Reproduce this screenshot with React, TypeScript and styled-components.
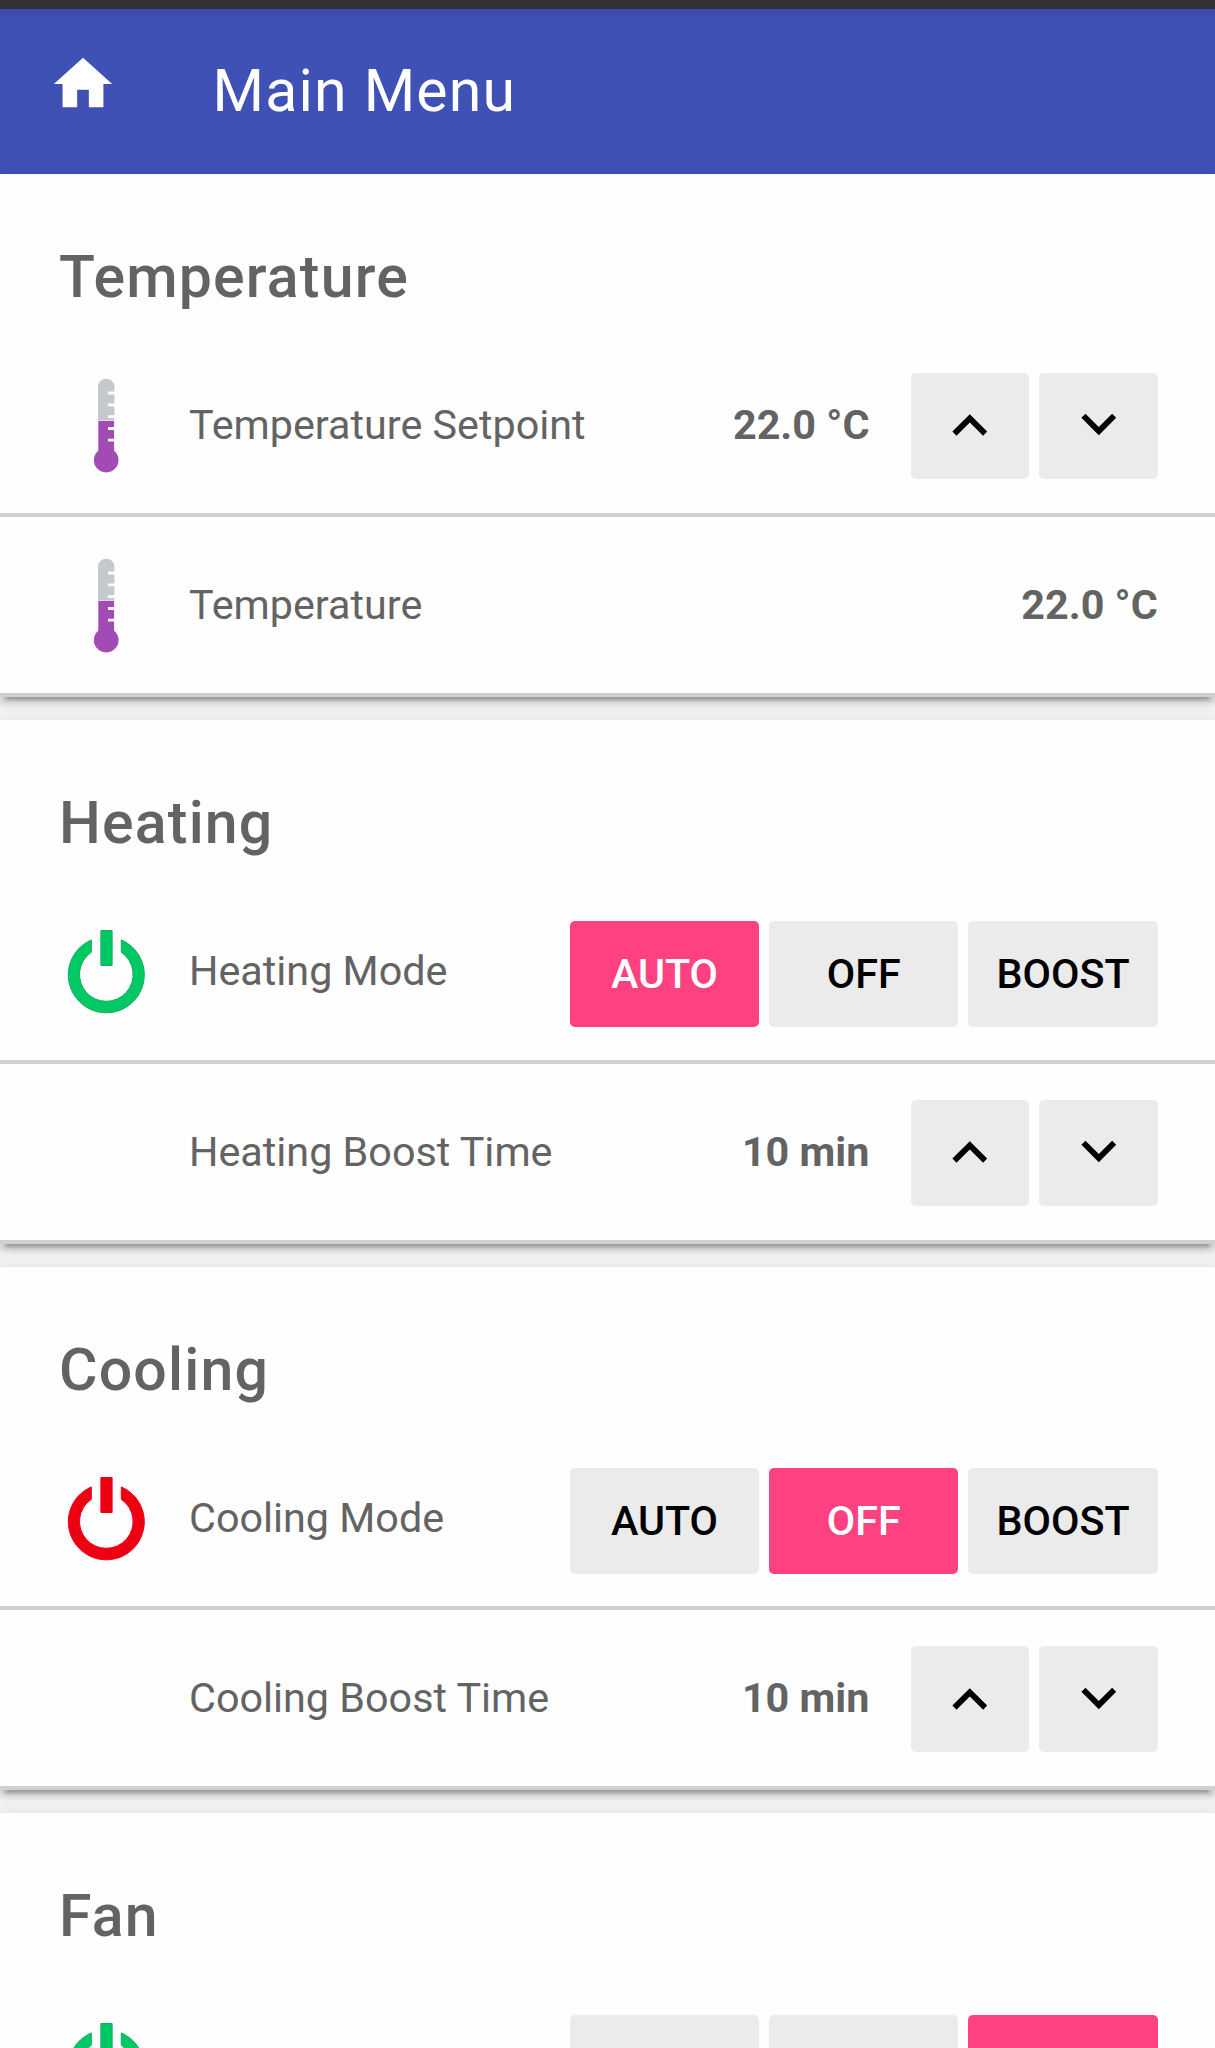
import React from 'react';
import styled, { createGlobalStyle, css } from 'styled-components';

const GlobalStyle = createGlobalStyle`
  html, body { margin: 0; padding: 0; background: #f3f3f3; }
  *, *::before, *::after { box-sizing: border-box; }
  body { font-family: Roboto, "Liberation Sans", sans-serif; color: #636363; }
`;

const Screen = styled.div`
  width: 1215px;
  height: 2048px;
  overflow: hidden;
  background: #f3f3f3;
  display: flex;
  flex-direction: column;
`;

const StatusBar = styled.div`
  flex: none;
  height: 9px;
  background: #333333;
`;

const AppBar = styled.header`
  flex: none;
  height: 164.6px;
  display: flex;
  align-items: flex-start;
  padding: 40px 48px 0;
  background: linear-gradient(#3c4cab 0, #3f51b5 10px);
  color: #fff;
`;

const HomeIcon = styled.svg`
  flex: none;
  width: 70px;
  height: 70px;
  fill: currentColor;
`;

const Title = styled.h1`
  margin: 7px 0 0 94.6px;
  font-size: 59px;
  line-height: 70px;
  font-weight: 400;
  letter-spacing: 1.18px;
`;

const Cards = styled.main`
  flex: none;
  display: flex;
  flex-direction: column;
  gap: 22.9px;
`;

const Card = styled.section`
  background: #fefefe;
  box-shadow:
    0 6px 6px 0 rgba(0, 0, 0, 0.14),
    0 9px 3px -6px rgba(0, 0, 0, 0.2),
    0 3px 15px 0 rgba(0, 0, 0, 0.12);
`;

const CardTitle = styled.h2`
  margin: 0;
  height: 163.2px;
  padding: 68px 60px 0 59px;
  font-size: 59px;
  line-height: 70px;
  font-weight: 500;
  letter-spacing: 1.18px;
`;

const Row = styled.div`
  height: 180.25px;
  display: flex;
  align-items: center;
  padding: 0 57.3px 0 56px;
  border-bottom: 4px solid #d0d0d0;
`;

const IconSlot = styled.div<{ $drop?: number }>`
  flex: none;
  width: 133px;
  height: 100px;
  margin-top: ${(p) => p.$drop ?? 0}px;
`;

const RowIcon = styled.svg`
  display: block;
  width: 100px;
  height: 100px;
`;

const Label = styled.span`
  flex: 1;
  font-size: 41.3px;
  line-height: 48px;
  white-space: nowrap;
`;

const Value = styled.span`
  font-size: 41.3px;
  line-height: 48px;
  font-weight: 700;
  white-space: nowrap;
`;

const Buttons = styled.div<{ $kind: 'stepper' | 'modes' }>`
  display: flex;
  gap: 10px;
  ${(p) =>
    p.$kind === 'stepper'
      ? css`
          margin-left: 41.7px;
          padding-top: 2px;
        `
      : css`
          padding-top: 6px;
        `}
`;

const Button = styled.button<{ $wide?: boolean; $active?: boolean }>`
  width: ${(p) => (p.$wide ? 189.3 : 118.3)}px;
  height: 106px;
  padding: 0;
  border: 0;
  border-radius: 5px;
  display: flex;
  align-items: center;
  justify-content: center;
  font: 500 41.3px/48px Roboto, "Liberation Sans", sans-serif;
  background: ${(p) => (p.$active ? '#ff4081' : '#ebebeb')};
  color: ${(p) => (p.$active ? '#fff' : '#000')};
`;

const Chevron = styled.svg`
  width: 69.6px;
  height: 69.6px;
  fill: currentColor;
`;

function Thermometer() {
  return (
    <RowIcon viewBox="0 0 100 100">
      <path d="M42 45V11.9a8.2 8.2 0 0 1 16.4 0V45z" fill="#c3c9cc" />
      <path d="M42.3 45.7h15.8v30a12.3 12.3 0 1 1-15.8 0z" fill="#a24bb5" />
      <path d="M52 18h7M52 29.8h7M52 41.7h7M52 53.5h7M52 65.2h7" stroke="#fefefe" strokeWidth="2.8" />
    </RowIcon>
  );
}

function Power({ color, edge }: { color: string; edge: string }) {
  return (
    <RowIcon viewBox="0 0 100 100">
      <g fill={color} stroke={edge} strokeWidth="1">
        <path d="M44.9 6.5h11.2v35H44.9z" />
        <path d="M35.3 15.9A38 38 0 1 0 65.3 15.9V28.3A26.8 26.8 0 1 1 35.3 28.3z" />
      </g>
    </RowIcon>
  );
}

const powerOn = <Power color="#00c864" edge="#0fae5c" />;
const powerOff = <Power color="#ee0013" edge="#ee0013" />;

function Stepper() {
  return (
    <Buttons $kind="stepper">
      <Button aria-label="Increase">
        <Chevron viewBox="0 0 24 24">
          <path d="M7.41 15.41L12 10.83l4.59 4.58L18 14l-6-6-6 6z" />
        </Chevron>
      </Button>
      <Button aria-label="Decrease">
        <Chevron viewBox="0 0 24 24">
          <path d="M7.41 7.84L12 12.42l4.59-4.58L18 9.25l-6 6-6-6z" />
        </Chevron>
      </Button>
    </Buttons>
  );
}

function Modes({ options, active }: { options: string[]; active: string }) {
  return (
    <Buttons $kind="modes">
      {options.map((o) => (
        <Button key={o} $wide $active={o === active}>
          {o}
        </Button>
      ))}
    </Buttons>
  );
}

interface ItemProps {
  icon?: React.ReactNode;
  drop?: number;
  label: string;
  children: React.ReactNode;
}

function Item({ icon, drop, label, children }: ItemProps) {
  return (
    <Row>
      <IconSlot $drop={drop}>{icon}</IconSlot>
      <Label>{label}</Label>
      {children}
    </Row>
  );
}

export default function App() {
  return (
    <>
      <GlobalStyle />
      <Screen>
        <StatusBar />
        <AppBar>
          <HomeIcon viewBox="0 0 24 24">
            <path d="M10 20v-6h4v6h5v-8h3L12 3 2 12h3v8z" />
          </HomeIcon>
          <Title>Main Menu</Title>
        </AppBar>
        <Cards>
          <Card>
            <CardTitle>Temperature</CardTitle>
            <Item icon={<Thermometer />} label="Temperature Setpoint">
              <Value>22.0 °C</Value>
              <Stepper />
            </Item>
            <Item icon={<Thermometer />} label="Temperature">
              <Value>22.0 °C</Value>
            </Item>
          </Card>
          <Card>
            <CardTitle>Heating</CardTitle>
            <Item icon={powerOn} drop={5} label="Heating Mode">
              <Modes options={['AUTO', 'OFF', 'BOOST']} active="AUTO" />
            </Item>
            <Item label="Heating Boost Time">
              <Value>10 min</Value>
              <Stepper />
            </Item>
          </Card>
          <Card>
            <CardTitle>Cooling</CardTitle>
            <Item icon={powerOff} drop={5} label="Cooling Mode">
              <Modes options={['AUTO', 'OFF', 'BOOST']} active="OFF" />
            </Item>
            <Item label="Cooling Boost Time">
              <Value>10 min</Value>
              <Stepper />
            </Item>
          </Card>
          <Card>
            <CardTitle>Fan</CardTitle>
            <Item icon={powerOn} drop={5} label="Fan Mode">
              <Modes options={['AUTO', 'OFF', 'ON']} active="ON" />
            </Item>
          </Card>
        </Cards>
      </Screen>
    </>
  );
}
